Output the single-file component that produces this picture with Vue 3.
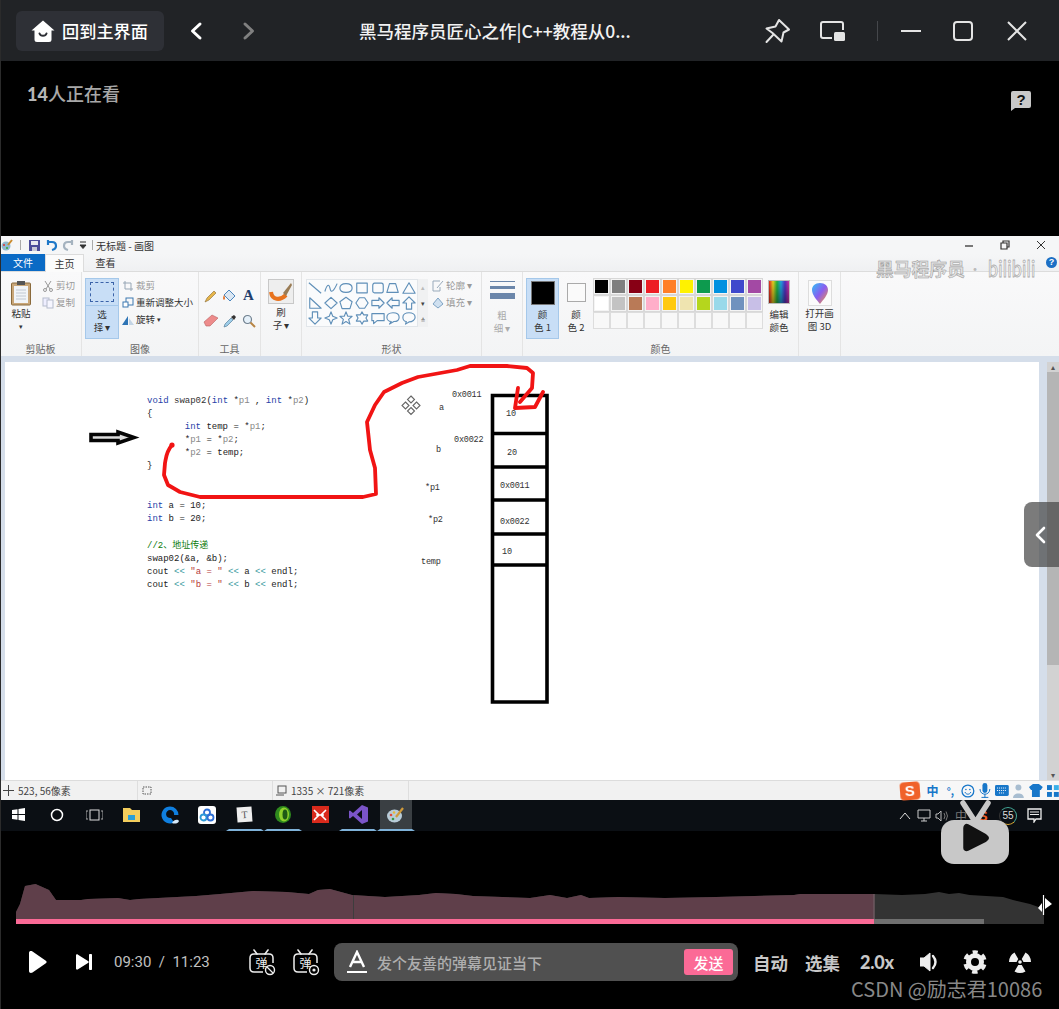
<script setup>
const paletteTop = ['#000000','#7f7f7f','#880015','#ed1c24','#ff7f27','#fff200','#0d9a4e','#0091e0','#3f48cc','#a349a4']
const paletteMid = ['#ffffff','#c3c3c3','#b97a57','#ffaec9','#ffc90e','#efe4b0','#b5d61d','#99d9ea','#7092be','#c8bfe7']
const paletteEnd = Array(10).fill('#f8f8f8')
const palette = [...paletteTop, ...paletteMid, ...paletteEnd]

const shapes = [
  'M1 2 L15 14','M1 12 C4 2 6 4 7 9 S11 12 15 3','M8 3 C3 3 1 5 1 8 S3 13 8 13 S15 11 15 8 S13 3 8 3Z','M2 2.5H14V13.5H2Z','M4 2.5H12Q14 2.5 14 5V11Q14 13.5 12 13.5H4Q2 13.5 2 11V5Q2 2.5 4 2.5Z','M4 3H11L14 13H1Z','M8 2L15 14H1Z',
  'M2 2L15 14H2Z','M8 1.5L15 8L8 14.5L1 8Z','M8 1.5L15 6.5L12.5 14.5H3.5L1 6.5Z','M5 2H11L15 8L11 14H5L1 8Z','M1 5H9V2L15 8L9 14V11H1Z','M15 5H7V2L1 8L7 14V11H15Z','M5 15V8H1L8 1L15 8H11V15Z',
  'M5 1V8H1L8 15L15 8H11V1Z','M8 1L10 6L15 8L10 10L8 15L6 10L1 8L6 6Z','M8 1L10 6H15L11 9.5L12.5 15L8 12L3.5 15L5 9.5L1 6H6Z','M8 1L10 4.5H14.5L12.5 8L14.5 11.5H10L8 15L6 11.5H1.5L3.5 8L1.5 4.5H6Z','M1 3H15V11H7L3 14.5V11H1Z','M8 2C3 2 1 4.5 1 7S3 12 6 12L4 15L9 12C13 12 15 10 15 7S13 2 8 2Z','M8 2C4 2 1 4 1 7C1 10 3 12 5 12L4 15L8 12.5C12 12.5 15 10 15 7S12 2 8 2Z'
]

const codeLines = [
  [['kw','void'],['',' '],['fn','swap02'],['','('],['kw','int'],['',' *'],['par','p1'],['',' , '],['kw','int'],['',' *'],['par','p2'],['',')']],
  [['','{']],
  [['','       '],['kw','int'],['',' temp = *'],['par','p1'],['',';']],
  [['','       *'],['par','p1'],['',' = *'],['par','p2'],['',';']],
  [['','       *'],['par','p2'],['',' = temp;']],
  [['','}']],
  [['',' ']],
  [['',' ']],
  [['kw','int'],['',' a = 10;']],
  [['kw','int'],['',' b = 20;']],
  [['',' ']],
  [['com','//2、地址传递']],
  [['','swap02(&a, &b);']],
  [['','cout '],['op','<<'],['',' '],['str','"a = "'],['',' '],['op','<<'],['',' a '],['op','<<'],['',' endl;']],
  [['','cout '],['op','<<'],['',' '],['str','"b = "'],['',' '],['op','<<'],['',' b '],['op','<<'],['',' endl;']]
]

const labels = [
  { t: '0x0011', x: 452, y: 395 }, { t: 'a', x: 439, y: 408 },
  { t: '0x0022', x: 454, y: 440 }, { t: 'b', x: 436, y: 450 },
  { t: '*p1', x: 425, y: 488 }, { t: '*p2', x: 428, y: 520 },
  { t: 'temp', x: 421, y: 562 }, { t: '10', x: 506, y: 414 },
  { t: '20', x: 507, y: 453 }, { t: '0x0011', x: 500, y: 486 },
  { t: '0x0022', x: 500, y: 522 }, { t: '10', x: 502, y: 552 }
].map(l => ({ ...l, left: l.x - 5 + 'px', top: l.y - 362 - 6 + 'px' }))
</script>

<template>
  <div class="page">
    <header class="topbar">
      <button class="home">
        <svg width="24" height="24" viewBox="0 0 24 24"><path d="M12 1.5 23.5 11.5 20.5 11.5 20.5 20.5Q20.5 23 18 23H6Q3.5 23 3.5 20.5V11.5H.5Z" fill="#fff"/><path d="M8.5 14.5C9.5 17.5 14.500 17.500 15.500 14.500" stroke="#2e3036" stroke-width="2" fill="none" stroke-linecap="round"/></svg>
        <span>回到主界面</span>
      </button>
      <svg class="nav nav-back" width="14" height="20" viewBox="0 0 14 20"><path d="M11 3 3.500 10 11 17" stroke="#fff" stroke-width="3" fill="none" stroke-linecap="round" stroke-linejoin="round"/></svg>
      <svg class="nav nav-next" width="14" height="20" viewBox="0 0 14 20"><path d="M3 3 10.500 10 3 17" stroke="#808080" stroke-width="3" fill="none" stroke-linecap="round" stroke-linejoin="round"/></svg>
      <div class="title">黑马程序员匠心之作|C++教程从0...</div>
      <div class="winbtns">
        <svg class="w-pin" width="28" height="28" viewBox="0 0 28 28"><path d="M16 3 26 12.500 20.500 15.500 18.500 24.500 9.500 16 3.500 11.500 12.500 9.500ZM10 18 3.500 25" stroke="#e4e4e4" stroke-width="2" fill="none" stroke-linejoin="round" stroke-linecap="round"/></svg>
        <svg class="w-pip" width="26" height="24" viewBox="0 0 26 24"><path d="M13 19H4Q2 19 2 17V5Q2 3 4 3H22Q24 3 24 5V11" stroke="#e4e4e4" stroke-width="2" fill="none"/><rect x="15" y="13" width="11" height="9" rx="1.500" fill="#e4e4e4"/></svg>
        <i class="w-sep"></i>
        <svg class="w-min" width="22" height="22" viewBox="0 0 22 22"><path d="M1 11H21" stroke="#e4e4e4" stroke-width="2"/></svg>
        <svg class="w-max" width="22" height="22" viewBox="0 0 22 22"><rect x="2" y="2" width="18" height="18" rx="3" stroke="#e4e4e4" stroke-width="2" fill="none"/></svg>
        <svg class="w-close" width="22" height="22" viewBox="0 0 22 22"><path d="M2 2 20 20M20 2 2 20" stroke="#e4e4e4" stroke-width="2"/></svg>
      </div>
    </header>

    <section class="viewers">
      <span class="viewer-count"><b>14</b>人正在看</span>
      <svg class="help" width="22" height="22" viewBox="0 0 22 22"><path d="M3 1H19Q21 1 21 3V16Q21 18 19 18H5L1 21V3Q1 1 3 1Z" fill="#c8c8c8"/><text x="11" y="15" text-anchor="middle" font-size="15" font-weight="700" font-family="Liberation Sans, sans-serif" fill="#111">?</text></svg>
    </section>

    <section class="video">
      <div class="paint">
        <div class="pt-title">
          <svg width="12" height="12" viewBox="0 0 12 12"><circle cx="5" cy="7" r="4.500" fill="#8fb8d0"/><circle cx="3" cy="6" r="1" fill="#d33"/><circle cx="6" cy="9" r="1" fill="#3a3"/><path d="M7 6 11 1" stroke="#c98a2c" stroke-width="2"/></svg>
          <i class="qsep"></i>
          <svg class="q-save" width="13" height="13" viewBox="0 0 13 13"><rect x="1" y="1" width="11" height="11" fill="#4b4b9a"/><rect x="3" y="2" width="7" height="4" fill="#e8e8f0"/><rect x="4" y="8" width="5" height="4" fill="#c8c8d8"/></svg>
          <svg width="13" height="13" viewBox="0 0 13 13"><path d="M3 3 H7 Q11 3 11 7 Q11 10 7 11 M3 1V6" stroke="#1e78c8" stroke-width="2.200" fill="none"/></svg>
          <svg width="13" height="13" viewBox="0 0 13 13"><path d="M10 3 H6 Q2 3 2 7 Q2 10 6 11 M10 1V6" stroke="#a5b3bf" stroke-width="2.200" fill="none"/></svg>
          <svg width="8" height="8" viewBox="0 0 8 8"><path d="M1 1H7M1 4H7L4 7.500Z" stroke="#333" fill="#333"/></svg>
          <i class="qsep q2"></i>
          <span class="doc-name">无标题 - 画图</span>
          <span class="pt-win">
            <svg width="10" height="10" viewBox="0 0 10 10"><path d="M1 6H9" stroke="#333" stroke-width="1.300"/></svg>
            <svg width="10" height="10" viewBox="0 0 10 10"><path d="M3 3V1H9V7H7M1 3H7V9H1Z" stroke="#333" stroke-width="1.200" fill="none"/></svg>
            <svg width="10" height="10" viewBox="0 0 10 10"><path d="M1 1 9 9M9 1 1 9" stroke="#333" stroke-width="1"/></svg>
          </span>
        </div>
        <div class="pt-tabs">
          <span class="tab file">文件</span>
          <span class="tab active">主页</span>
          <span class="tab view">查看</span>
          <span class="watermark"><em>黑马程序员</em><small>·</small><strong>bilibili</strong></span>
          <span class="help-dot">?</span>
        </div>

        <div class="ribbon">
          <div class="group g-clip">
            <div class="g-body">
              <div class="big">
                <svg width="22" height="26" viewBox="0 0 22 26"><rect x="1.500" y="3" width="19" height="22" rx="1" fill="#c9a77a" stroke="#8a6a3c"/><rect x="4" y="6" width="14" height="17" fill="#f1f4f8"/><rect x="7" y="1" width="8" height="4" fill="#555"/><path d="M6 10H16M6 13H16M6 16H16M6 19H16" stroke="#c0c8d2"/></svg>
                <span>粘贴</span><span class="caret">▾</span>
              </div>
              <div class="small-col muted">
                <span class="s-row"><svg width="12" height="12" viewBox="0 0 12 12"><path d="M3 1 8 9M9 1 4 9" stroke="#999"/><circle cx="3" cy="10" r="1.500" fill="none" stroke="#999"/><circle cx="9" cy="10" r="1.500" fill="none" stroke="#999"/></svg>剪切</span>
                <span class="s-row"><svg width="12" height="12" viewBox="0 0 12 12"><rect x="1" y="1" width="6" height="8" fill="#eef" stroke="#b5bccc"/><rect x="5" y="3" width="6" height="8" fill="#f6f6ff" stroke="#b5bccc"/></svg>复制</span>
              </div>
            </div>
            <div class="g-label">剪贴板</div>
          </div>

          <div class="group g-image">
            <div class="g-body">
              <div class="select-btn">
                <div class="select-top"><i></i></div>
                <div class="select-text"><span>选</span><span>择 ▾</span></div>
              </div>
              <div class="small-col">
                <span class="s-row muted"><svg width="12" height="12" viewBox="0 0 12 12"><path d="M3 1V9H11M1 3H9V11" stroke="#97a6b5" fill="none"/></svg>裁剪</span>
                <span class="s-row"><svg width="12" height="12" viewBox="0 0 12 12"><rect x="4" y="1" width="7" height="7" fill="none" stroke="#3c78b0"/><rect x="1" y="5" width="5" height="5" fill="#fff" stroke="#3c78b0"/></svg>重新调整大小</span>
                <span class="s-row"><svg width="12" height="12" viewBox="0 0 12 12"><path d="M6 2V11H0Z" fill="#2e74b5"/><path d="M7 4V11H12Z" fill="#c4d5e6"/></svg>旋转 <span class="caret-in">▾</span></span>
              </div>
            </div>
            <div class="g-label">图像</div>
          </div>

          <div class="group g-tools">
            <div class="g-body tools-grid">
              <svg width="14" height="14" viewBox="0 0 14 14"><path d="M1 13 3 9 10 2 12 4 5 11Z" fill="#e6b54a" stroke="#8a6a30" stroke-width=".6"/></svg>
              <svg width="15" height="15" viewBox="0 0 15 15"><path d="M7 2 13 8 8 13 2 7Z" fill="#dbe7f3" stroke="#4c86bd"/><path d="M2 7Q0 11 2 12 4 11 2 7Z" fill="#e4762e"/></svg>
              <span class="tool-a">A</span>
              <svg width="16" height="13" viewBox="0 0 16 13"><path d="M1 8 9 1 15 4 7 12H3Z" fill="#ed8b8b" stroke="#b85f5f" stroke-width=".6"/></svg>
              <svg width="14" height="14" viewBox="0 0 14 14"><path d="M1 13 2 10 8 4 10 6 4 12Z" fill="#9ecde8" stroke="#46708f" stroke-width=".6"/><path d="M8 3 11 1 13 3 11 6Z" fill="#333"/></svg>
              <svg width="14" height="14" viewBox="0 0 14 14"><circle cx="5.500" cy="5.500" r="4" fill="#e6f1fa" stroke="#70808f" stroke-width="1.200"/><path d="M8.500 8.500 13 13" stroke="#b78545" stroke-width="2"/></svg>
            </div>
            <div class="g-label"><span>工具</span></div>
          </div>

          <div class="group g-brush">
            <div class="g-body col-center">
              <div class="brush-ico">
                <svg width="24" height="23" viewBox="0 0 24 23"><path d="M2 12C3 20 11 21 17 15" stroke="#e8731e" stroke-width="4" fill="none"/><path d="M14 13 22 3 23 5 17 16Z" fill="#9a7c55"/></svg>
              </div>
              <span>刷</span><span>子 ▾</span>
            </div>
            <div class="g-label"> </div>
          </div>

          <div class="group g-shapes">
            <div class="g-body">
              <div class="gallery">
                <svg v-for="(d, i) in shapes" :key="i" width="14" height="14" viewBox="0 0 16 16"><path :d="d" fill="none" stroke="#5f8fb8" stroke-width="1.300" stroke-linejoin="round"/></svg>
              </div>
              <div class="gal-scroll"><span>▴</span><span class="dark">▾</span><span class="dark">⩮</span></div>
              <div class="small-col muted outline">
                <span class="s-row"><svg width="12" height="12" viewBox="0 0 12 12"><path d="M1 1H8M1 1V11H8V7M5 8 11 1" stroke="#9ab" fill="none"/></svg>轮廓 ▾</span>
                <span class="s-row"><svg width="12" height="12" viewBox="0 0 12 12"><path d="M6 1 11 7 6 11 1 7Z" fill="#cfe0f0" stroke="#7ea3c4"/></svg>填充 ▾</span>
              </div>
            </div>
            <div class="g-label">形状</div>
          </div>

          <div class="group g-size">
            <div class="g-body col-center">
              <div class="size-lines"><i class="l1"></i><i class="l2"></i><i class="l3"></i></div>
              <span>粗</span><span>细 ▾</span>
            </div>
            <div class="g-label"> </div>
          </div>

          <div class="group g-colors">
            <div class="g-body">
              <div class="color-pick active"><i class="sw black"></i><span>颜</span><span>色 1</span></div>
              <div class="color-pick"><i class="sw white"></i><span>颜</span><span>色 2</span></div>
              <div class="palette">
                <i v-for="(c, i) in palette" :key="i" :class="['cell', { blank: i >= 20 }]" :style="{ background: c }"></i>
              </div>
              <div class="edit-col"><i class="rainbow"></i><span>编辑</span><span>颜色</span></div>
            </div>
            <div class="g-label">颜色</div>
          </div>

          <div class="group g-3d">
            <div class="g-body col-center">
              <div class="ico-3d">
                <svg width="16" height="21" viewBox="0 0 16 21"><defs><linearGradient id="pg" x1="0" y1="0" x2="1" y2="1"><stop offset="0" stop-color="#2fc1f5"/><stop offset=".5" stop-color="#8a5cf0"/><stop offset="1" stop-color="#ff9a2e"/></linearGradient></defs><path d="M8 0C3 0 0 3 0 7 0 12 5 17 8 21 11 17 16 12 16 7 16 3 13 0 8 0Z" fill="url(#pg)"/></svg>
              </div>
              <span>打开画</span><span>图 3D</span>
            </div>
            <div class="g-label"> </div>
          </div>
          <div class="group g-rest"></div>
        </div>

        <div class="strip"></div>

        <div class="canvas">
          <div class="sheet">
            <pre class="code"><code v-for="(line, i) in codeLines" :key="i" class="code-line"><span v-for="(seg, j) in line" :key="j" :class="seg[0]">{{ seg[1] }}</span></code></pre>
            <span v-for="(l, i) in labels" :key="'l' + i" class="lab" :style="{ left: l.left, top: l.top }">{{ l.t }}</span>
            <svg class="draw" width="1034" height="418" viewBox="5 362 1034 418">
              <path d="M91 434.500H118V432L134 437.500 118 443V440.500H91Z" fill="#ddd" stroke="#050505" stroke-width="3.600"/>
              <path d="M492.500 395.500H547V702H492.500ZM492.500 433.500H547M492.500 467H547M492.500 500H547M492.500 534H547M492.500 565H547" fill="none" stroke="#000" stroke-width="3.600"/>
              <g fill="none" stroke="#666" stroke-width="1.100">
                <path d="M411 396 414.500 399.500 411 403 407.500 399.500ZM411 407.500 414.500 411 411 414.500 407.500 411ZM405.500 402 409 405.500 405.500 409 402 405.500ZM416.500 402 420 405.500 416.500 409 413 405.500Z"/>
              </g>
              <circle cx="172" cy="445" r="2.600" fill="#f11414"/>
              <path d="M172 445C166 452 166 458 165 463L164 475 168 485 180 492 200 497H363L376 494 375 468 370 450 367 422 375 405 384 392 402 383 418 377 457 370 470 366H507L527 368 533 373 532 388 520 402M518 388 515 408 535 407 543 392" fill="none" stroke="#f11414" stroke-width="3.800" stroke-linejoin="round" stroke-linecap="round"/>
            </svg>
          </div>
          <div class="vscroll"><i class="up">▴</i><i class="thumb"></i><i class="down">▾</i></div>
        </div>

        <div class="statusbar">
          <span class="st st1"><svg width="11" height="11" viewBox="0 0 11 11"><path d="M5.500 0V11M0 5.500H11" stroke="#444"/></svg>523, 56像素</span>
          <span class="st st2"><svg width="11" height="11" viewBox="0 0 11 11"><rect x="2" y="2" width="8" height="7" fill="none" stroke="#555" stroke-dasharray="1.500 1"/></svg></span>
          <span class="st st3"><svg width="11" height="11" viewBox="0 0 11 11"><rect x="2" y="1" width="8" height="7" fill="none" stroke="#555"/><path d="M0 10H8" stroke="#555"/></svg>1335 × 721像素</span>
        </div>
        <div class="ime">
          <span class="ime-s">S</span>
          <span class="ime-t">中</span>
          <span class="ime-t small">°,</span>
          <svg width="14" height="14" viewBox="0 0 14 14"><circle cx="7" cy="7" r="6" fill="none" stroke="#1877c9" stroke-width="1.300"/><path d="M4 8C5 11 9 11 10 8" fill="none" stroke="#1877c9"/><circle cx="5" cy="5.500" r=".8" fill="#1877c9"/><circle cx="9" cy="5.500" r=".8" fill="#1877c9"/></svg>
          <svg width="12" height="15" viewBox="0 0 12 15"><rect x="3.500" y="0" width="5" height="10" rx="2.500" fill="#1877c9"/><path d="M1 6C1 13 11 13 11 6M6 11V15M2.500 14.500H9.500" stroke="#1877c9" fill="none"/></svg>
          <svg width="14" height="11" viewBox="0 0 14 11"><rect width="14" height="11" rx="1.500" fill="#1877c9"/><path d="M2 3H12M2 5.500H12M4 8H10" stroke="#fff" stroke-dasharray="1 1"/></svg>
          <svg width="13" height="14" viewBox="0 0 13 14"><circle cx="5.500" cy="3.500" r="3" fill="#a8bdd0"/><path d="M0 14C0 8 11 8 11 14Z" fill="#a8bdd0"/></svg>
          <svg width="14" height="13" viewBox="0 0 14 13"><path d="M4 0H10L14 3 12 6H11V13H3V6H2L0 3Z" fill="#1877c9"/></svg>
          <svg width="12" height="12" viewBox="0 0 12 12"><rect width="5" height="5" fill="#1877c9"/><rect x="7" width="5" height="5" fill="#3ab0e8"/><rect y="7" width="5" height="5" fill="#1877c9"/><rect x="7" y="7" width="5" height="5" fill="#1877c9"/></svg>
        </div>
      </div>

      <div class="taskbar">
        <span class="tk"><svg width="13" height="13" viewBox="0 0 13 13"><path d="M0 2 5.500 1.200V6H0ZM6.500 1 13 0V6H6.500ZM0 7H5.500V11.800L0 11ZM6.500 7H13V13L6.500 12Z" fill="#fff"/></svg></span>
        <span class="tk"><svg width="14" height="14" viewBox="0 0 14 14"><circle cx="7" cy="7" r="5.500" fill="none" stroke="#fff" stroke-width="1.500"/></svg></span>
        <span class="tk"><svg width="17" height="12" viewBox="0 0 17 12"><rect x="4" y="1" width="9" height="10" fill="none" stroke="#ddd"/><path d="M2 2H0V10H2M15 2H17V10H15" stroke="#aaa" fill="none"/></svg></span>
        <span class="tk"><svg width="17" height="15" viewBox="0 0 17 15"><path d="M0 1H7L9 3H17V15H0Z" fill="#f3cd5c"/><rect x="5" y="8" width="7" height="5" fill="#2a9fd8"/></svg></span>
        <span class="tk"><svg width="18" height="18" viewBox="0 0 18 18"><path d="M9 0.500A8.500 8.500 0 1 0 13 16.500L10 12A4 4 0 1 1 13 9H17.500A8.500 8.500 0 0 0 9 0.500Z" fill="#0f7fe0"/><path d="M11 17C13 13 17 13 18 15 17 18 13 18 11 17Z" fill="#d5e8f8"/></svg></span>
        <span class="tk"><span class="baidu"><svg width="16" height="14" viewBox="0 0 16 14"><circle cx="8" cy="4.500" r="3" fill="none" stroke="#2d6fd6" stroke-width="1.800"/><circle cx="4.500" cy="9.500" r="3" fill="none" stroke="#2d9ad6" stroke-width="1.800"/><circle cx="11.500" cy="9.500" r="3" fill="none" stroke="#2d6fd6" stroke-width="1.800"/></svg></span></span>
        <span class="tk run"><span class="t-ico">T</span></span>
        <span class="tk run"><svg width="16" height="17" viewBox="0 0 16 17"><ellipse cx="8" cy="8.500" rx="8" ry="8.500" fill="#2f8a1e"/><ellipse cx="9" cy="8.500" rx="5" ry="7" fill="#8fd12c"/><ellipse cx="10" cy="8.500" rx="2.500" ry="5" fill="#1e5a15"/></svg></span>
        <span class="tk"><span class="x-ico"><svg width="14" height="12" viewBox="0 0 14 12"><path d="M1 1 6 6 1 11M13 1 8 6 13 11M3 6H11" stroke="#fff" stroke-width="1.600" fill="none"/></svg></span></span>
        <span class="tk run"><svg width="19" height="19" viewBox="0 0 19 19"><path d="M13 0 19 2.500V16.500L13 19 4 11 1 13.500 0 13V6L1 5.500 4 8ZM13 5 8 9.500 13 14Z" fill="#7a54c8"/></svg></span>
        <span class="tk run act"><svg width="18" height="16" viewBox="0 0 18 16"><ellipse cx="7.500" cy="9" rx="7.500" ry="6.500" fill="#b8ccd8"/><circle cx="4" cy="8" r="1.300" fill="#e04a3a"/><circle cx="7" cy="5.500" r="1.300" fill="#e8b83a"/><circle cx="6" cy="12" r="1.300" fill="#3a9a4a"/><path d="M9 10 16 1" stroke="#d09a3a" stroke-width="2.200"/></svg></span>
        <div class="tray">
          <span class="tr w18"><svg width="12" height="8" viewBox="0 0 12 8"><path d="M1 7 6 1 11 7" stroke="#ddd" fill="none"/></svg></span>
          <span class="tr w19"><svg width="15" height="14" viewBox="0 0 15 14"><path d="M2 1H14V9H2ZM5 12H11M8 9V12" stroke="#ccc" fill="none"/></svg></span>
          <span class="tr w18"><svg width="14" height="12" viewBox="0 0 14 12"><path d="M1 4H3L6 1V11L3 8H1Z" stroke="#bbb" fill="none"/><path d="M9 3Q11 6 9 9M11 1.500Q14 6 11 10.500" stroke="#777" fill="none"/></svg></span>
          <span class="tr w20 tray-text">中</span>
          <span class="tr w24 tray-s">S</span>
          <span class="tr w26 ring">55</span>
          <span class="tr w26"><svg width="15" height="15" viewBox="0 0 15 15"><path d="M1 1H14V11H9L7 14V11H1Z" fill="none" stroke="#eee" stroke-width="1.300"/><path d="M3 4H12M3 6.500H12" stroke="#eee"/></svg></span>
        </div>
      </div>
    </section>

    <svg class="tv" width="70" height="66" viewBox="0 0 70 66">
      <path d="M22 3 33 20M47 3 36 20" stroke="#c8c8c8" stroke-width="5.500" stroke-linecap="round"/>
      <rect x="0" y="20" width="68" height="44" rx="13" fill="#c8c8c8"/>
      <path d="M23 28C23 25 25 24 27 25L45 35C48 37 48 39 45 41L27 50C25 51 23 50 23 48Z" fill="#111" stroke="#111" stroke-width="1.500" stroke-linejoin="round"/>
    </svg>

    <div class="side-tab"><svg width="11" height="18" viewBox="0 0 11 18"><path d="M9 2 2 9 9 16" stroke="#fff" stroke-width="2.600" fill="none" stroke-linecap="round" stroke-linejoin="round"/></svg></div>

    <section class="timeline">
      <svg class="wave" width="1059" height="54" viewBox="0 880 1059 54">
        <defs><clipPath id="played"><rect x="0" y="880" width="874" height="50"/></clipPath></defs>
        <path d="M16 912 20 904 25 886 35.500 884 49 890 56 900H81L88 899 118 898 130 900 139 899 196 896 220 894 253 891 287 892 309 894 318 890 330 889 352 895 385 897 419 895 436 893 456 894 473 896 530 898 550 895 567 898 581 895 589 898 618 897 665 898 716 897 794 895 800 894 874 894 902 895 925 894 939 892 949 894 959 893 969.500 895 1003 897 1013 900 1030 904 1044 909V924H16Z" fill="#333"/>
        <path clip-path="url(#played)" d="M16 912 20 904 25 886 35.500 884 49 890 56 900H81L88 899 118 898 130 900 139 899 196 896 220 894 253 891 287 892 309 894 318 890 330 889 352 895 385 897 419 895 436 893 456 894 473 896 530 898 550 895 567 898 581 895 589 898 618 897 665 898 716 897 794 895 800 894 874 894 V924H16Z" fill="#5f3f4a"/>
        <path d="M353.500 895V919" stroke="#3d3d3d"/>
        <path d="M874 894V919" stroke="#6c5a60" stroke-width="1.500"/>
        <rect x="16" y="919" width="858" height="5" fill="#fb6a96"/>
        <rect x="874" y="919" width="110" height="5" fill="#6f6f6f"/>
        <path d="M1043.500 895V915" stroke="#fff" stroke-width="1.200"/>
        <path d="M1045 898 1052 904 1045 909ZM1042 903 1038 908 1042 912Z" fill="#fff"/>
      </svg>
    </section>

    <footer class="controls">
      <svg class="play" width="20" height="24" viewBox="0 0 20 24"><path d="M2 3C2 1 4 0.500 5.500 1.500L18.500 10.500C20 11.500 20 12.500 18.500 13.500L5.500 22.500C4 23.500 2 23 2 21Z" fill="#fff"/></svg>
      <svg class="next" width="16" height="16" viewBox="0 0 16 16"><path d="M0 1.500C0 .5 1 0 2 .7L12 7C13 7.700 13 8.300 12 9L2 15.300C1 16 0 15.500 0 14.500Z" fill="#fff"/><rect x="13" y="0" width="3" height="16" rx=".8" fill="#fff"/></svg>
      <span class="time">09:30&nbsp;&nbsp;/&nbsp;&nbsp;11:23</span>
      <svg class="dm dm1" width="27" height="27" viewBox="0 0 27 27"><path d="M8 5 5 1M16 5 19 1" stroke="#eee" stroke-width="1.600" stroke-linecap="round"/><path d="M14 23H5Q1 23 1 19V9Q1 5 5 5H20Q24 5 24 9V14" stroke="#eee" stroke-width="1.500" fill="none"/><text x="12.500" y="19" text-anchor="middle" font-size="12" fill="#eee" font-family="Noto Sans CJK SC, sans-serif">弹</text><circle cx="21" cy="21" r="4.500" fill="#000" stroke="#eee" stroke-width="1.400"/><path d="M18 18 24 24" stroke="#eee" stroke-width="1.300"/></svg>
      <svg class="dm dm2" width="27" height="27" viewBox="0 0 27 27"><path d="M8 5 5 1M16 5 19 1" stroke="#eee" stroke-width="1.600" stroke-linecap="round"/><path d="M14 23H5Q1 23 1 19V9Q1 5 5 5H20Q24 5 24 9V14" stroke="#eee" stroke-width="1.500" fill="none"/><text x="12.500" y="19" text-anchor="middle" font-size="12" fill="#eee" font-family="Noto Sans CJK SC, sans-serif">弹</text><circle cx="21" cy="21" r="4.500" fill="#000" stroke="#eee" stroke-width="1.400"/><circle cx="21" cy="21" r="1.600" fill="#eee"/></svg>
      <div class="dm-input">
        <svg width="20" height="24" viewBox="0 0 20 24"><path d="M3 17 10 2 17 17M5.500 12H14.500" stroke="#fff" stroke-width="2.400" fill="none"/><path d="M0 22H20" stroke="#fff" stroke-width="2"/></svg>
        <span class="ph">发个友善的弹幕见证当下</span>
        <button class="send">发送</button>
      </div>
      <span class="ctl c-auto">自动</span>
      <span class="ctl c-sel">选集</span>
      <span class="ctl c-speed">2.0x</span>
      <svg class="vol" width="22" height="20" viewBox="0 0 22 20"><path d="M0 6H4L10 1V19L4 14H0Z" fill="#eee" stroke="#eee" stroke-linejoin="round"/><path d="M13 4Q18 10 13 16" stroke="#eee" stroke-width="2.400" fill="none" stroke-linecap="round"/></svg>
      <svg class="gear" width="24" height="24" viewBox="0 0 24 24"><circle cx="12" cy="12" r="6.500" fill="none" stroke="#eee" stroke-width="5"/><circle cx="12" cy="12" r="10" fill="none" stroke="#eee" stroke-width="3.500" stroke-dasharray="5.500 4.970" stroke-dashoffset="2.750" transform="rotate(-90 12 12)"/></svg>
      <svg class="rad" width="24" height="24" viewBox="0 0 24 24"><path d="M13.750 15.030 17.500 21.500A11 11 0 0 1 6.500 21.500L10.250 15.030ZM13.750 8.970 17.500 2.470A11 11 0 0 1 23 12L15.500 12ZM8.500 12 1 12A11 11 0 0 1 6.500 2.470L10.250 8.970Z" fill="#eee"/><circle cx="12" cy="12" r="1.800" fill="#eee"/></svg>
    </footer>
    <div class="csdn">CSDN @励志君10086</div>
  </div>
</template>

<style>
html, body { margin: 0; background: #000; }
</style>

<style scoped>
.page {
  position: relative;
  width: 1059px;
  height: 1009px;
  overflow: hidden;
  background: #000;
  font-family: "Noto Sans CJK SC", "Liberation Sans", sans-serif;
  color: #eee;
}
.page::before {
  content: "";
  position: absolute;
  left: 0; top: 0; bottom: 0;
  width: 1px;
  background: #2b2b2b;
  z-index: 9;
}
.topbar {
  height: 61px;
  box-sizing: border-box;
  background: #212326;
  display: flex;
  align-items: center;
  position: relative;
}
.home {
  margin-left: 16px;
  width: 148px;
  height: 40px;
  border: 0;
  border-radius: 6px;
  background: #2e3036;
  color: #fff;
  display: flex;
  align-items: center;
  gap: 7px;
  padding: 0 0 0 15px;
  font: 500 17.200px "Noto Sans CJK SC", sans-serif;
}
.nav { display: block; }
.nav-back { margin-left: 25px; }
.nav-next { margin-left: 39px; }
.title {
  margin-left: 103px;
  width: 290px;
  font-size: 17.500px;
  font-weight: 500;
  color: #f2f2f2;
  white-space: nowrap;
}
.winbtns { display: flex; align-items: center; margin-left: 112px; }
.w-pin { margin-left: 2px; }
.w-pip { margin-left: 28px; }
.w-sep { width: 1px; height: 20px; background: #45474b; margin-left: 32px; }
.w-min { margin-left: 22px; }
.w-max { margin-left: 30px; }
.w-close { margin-left: 32px; }

.viewers {
  height: 175px;
  position: relative;
}
.viewer-count {
  position: absolute;
  left: 27px; top: 19px;
  font-size: 18px;
  font-weight: 500;
  color: #a8a8a8;
}
.viewer-count b { font-family: "Lato", sans-serif; font-weight: 900; color: #b5b5b5; }
.help { position: absolute; left: 1010px; top: 29px; }

.video { height: 595px; }
.paint {
  height: 564px;
  position: relative;
  background: #f5f6f7;
  color: #444;
  font-size: 9.500px;
  line-height: 13px;
  filter: blur(.5px);
  display: flex;
  flex-direction: column;
}
.pt-title {
  height: 18px;
  background: #f5f6f7;
  display: flex;
  align-items: center;
  padding-left: 1px;
  gap: 4px;
  flex: none;
}
.qsep { width: 1px; height: 10px; background: #aaa; margin: 0 3px; }
.qsep.q2 { margin: 0 -1px 0 1px; }
.doc-name { font-size: 10px; color: #333; }
.pt-win { margin-left: auto; margin-right: 13px; display: flex; gap: 26px; }
.pt-tabs {
  height: 18px;
  flex: none;
  display: flex;
  position: relative;
  background: linear-gradient(#f5f6f7, #eff0f2);
  border-bottom: 1px solid #dcdcdc;
  box-sizing: border-box;
  align-items: stretch;
}
.tab { width: 39px; text-align: center; line-height: 18px; color: #333; font-size: 10px; }
.tab.file { width: 44px; margin-left: 1px; background: #0a6ac5; color: #fff; }
.tab.active { background: #fbfbfb; height: 18px; border: 1px solid #dcdcdc; border-bottom: 0; box-sizing: border-box; }
.tab.view { margin-left: 2px; }
.watermark {
  position: absolute;
  left: 876px; top: 2px;
  display: flex;
  align-items: center;
  height: 24px;
  color: rgba(235, 235, 235, .8);
  z-index: 2;
}
.watermark em {
  font-style: normal;
  font-size: 17.800px;
  font-weight: 700;
  color: #e2e2e2;
  -webkit-text-stroke: .5px #999;
}
.watermark small { font-size: 14px; color: #bbb; margin: 0 6px 0 3px; }
.watermark strong {
  font-family: "Lato", sans-serif;
  font-size: 18px;
  font-weight: 400;
  color: #f5f5f5;
  -webkit-text-stroke: .6px #a9a9a9;
  letter-spacing: .2px;
  display: inline-block;
  transform: scaleY(1.3);
}
.help-dot {
  position: absolute;
  left: 1046px; top: 3px;
  width: 11px; height: 11px;
  border-radius: 50%;
  background: #1b6fc5;
  color: #fff;
  font: 700 9px/11px "Liberation Sans", sans-serif;
  text-align: center;
}
.ribbon {
  height: 84px;
  flex: none;
  display: flex;
  background: linear-gradient(#f9f9fa, #f3f4f5);
}
.group {
  box-sizing: border-box;
  border-right: 1px solid #e4e4e4;
  display: flex;
  flex-direction: column;
  flex: none;
}
.g-body { flex: 1; display: flex; min-height: 0; }
.g-label { height: 19px; box-sizing: border-box; padding-top: 5px; line-height: 14px; text-align: center; color: #666; font-size: 10px; white-space: pre; }
.g-clip { width: 82px; }
.g-image { width: 117px; }
.g-tools { width: 62px; }
.g-brush { width: 41px; }
.g-shapes { width: 180px; }
.g-size { width: 41px; }
.g-colors { width: 276px; }
.g-3d { width: 42px; }
.g-rest { flex: 1; border: 0; }
.big { width: 42px; padding-top: 8px; display: flex; flex-direction: column; align-items: center; color: #333; }
.big span:first-of-type { margin-top: 1px; }
.caret { font-size: 7px; line-height: 13px; }
.caret-in { font-size: 7px; }
.small-col { display: flex; flex-direction: column; padding-top: 7px; gap: 3.500px; white-space: nowrap; color: #333; }
.small-col.muted { color: #9a9a9a; }
.s-row { display: flex; align-items: center; gap: 2px; height: 13.500px; }
.muted { color: #9a9a9a; }
.select-btn {
  margin: 6px 3px 0 3px;
  width: 34px;
  height: 61px;
  box-sizing: border-box;
  background: #c8def6;
  border: 1px solid #a5c8ea;
  display: flex;
  flex-direction: column;
  flex: none;
}
.select-top { height: 27px; border-bottom: 1px solid #a5c8ea; display: flex; align-items: center; justify-content: center; box-sizing: border-box; }
.select-top i { width: 22px; height: 18px; border: 1px dashed #3a62a8; }
.select-text { display: flex; flex-direction: column; align-items: center; padding-top: 2px; color: #333; }
.tools-grid {
  display: grid;
  grid-template-columns: repeat(3, 19px);
  grid-template-rows: 25px 25px;
  place-items: center;
  padding: 11px 0 0 2px;
}
.tool-a { font: 700 15px/15px "Liberation Serif", serif; color: #1f3f6e; }
.col-center { flex-direction: column; align-items: center; color: #333; }
.brush-ico {
  width: 26px; height: 25px;
  margin: 7px 0 2px;
  background: #eee;
  border: 1px solid #c8c8c8;
  display: flex; align-items: center; justify-content: center;
  box-sizing: border-box;
}
.gallery {
  width: 112px;
  height: 48px;
  margin: 7px 0 0 4px;
  box-sizing: border-box;
  background: #fafbfc;
  border: 1px solid #e2e6ea;
  display: grid;
  grid-template-columns: repeat(7, 1fr);
  grid-template-rows: repeat(3, 1fr);
  place-items: center;
  flex: none;
}
.gal-scroll {
  width: 10px;
  height: 48px;
  margin-top: 7px;
  background: #f0f1f2;
  display: flex;
  flex-direction: column;
  justify-content: space-around;
  align-items: center;
  font-size: 7px;
  color: #bbb;
}
.gal-scroll .dark { color: #444; }
.outline { padding-left: 4px; }
.g-size .col-center { color: #aaa; }
.size-lines { width: 25px; margin: 9px 0 10px; display: flex; flex-direction: column; gap: 4px; }
.size-lines i { display: block; background: #6b86aa; }
.l1 { height: 1px; }
.l2 { height: 3px; }
.l3 { height: 6px; }
.g-colors .g-body { padding-left: 3px; }
.color-pick {
  width: 33px;
  height: 61px;
  margin-top: 6px;
  box-sizing: border-box;
  display: flex;
  flex-direction: column;
  align-items: center;
  color: #333;
  border: 1px solid transparent;
  flex: none;
  margin-right: 6px;
}
.color-pick:nth-child(2) { width: 22px; margin-right: 6px; }
.color-pick.active { background: #c8def6; border-color: #a5c8ea; }
.sw { display: block; flex: none; box-sizing: border-box; }
.sw.black { width: 24px; height: 24px; margin: 2px 0 3px; background: #000; border: 1px solid #777; }
.sw.white { width: 19px; height: 19px; margin: 4px 0 6px; background: #fafafa; border: 1px solid #aaa; }
.palette {
  width: 170px;
  height: 51px;
  margin-top: 6px;
  display: grid;
  grid-template-columns: repeat(10, 17px);
  grid-template-rows: repeat(3, 17px);
  flex: none;
}
.cell {
  display: block;
  box-sizing: border-box;
  border: 1px solid #d8d8d8;
  outline: 1px solid #f4f4f4;
  outline-offset: -2px;
}
.cell.blank { outline: 0; border-color: #ddd; background: #f8f8f8; }
.edit-col { margin-left: 4px; width: 24px; display: flex; flex-direction: column; align-items: center; color: #333; }
.rainbow {
  display: block;
  width: 22px; height: 24px;
  margin: 8px 0 4px;
  box-sizing: border-box;
  border: 1px solid #bbb;
  background: linear-gradient(#0000, #0006), linear-gradient(90deg, #e02020, #e8d020, #20b040, #20a0e0, #5030c0, #d030a0);
}
.ico-3d {
  width: 24px; height: 26px;
  margin: 8px 0 1px;
  box-sizing: border-box;
  background: #fbfbfb;
  border: 1px solid #ddd;
  display: flex; align-items: center; justify-content: center;
}
.strip { height: 6px; flex: none; background: #d5deea; }
.canvas { height: 418px; flex: none; display: flex; background: #d5deea; padding-left: 5px; box-sizing: border-box; }
.sheet { width: 1034px; height: 418px; background: #fff; position: relative; flex: none; }
.code {
  position: absolute;
  left: 142px; top: 32.500px;
  margin: 0;
  font: 9px/13.200px "Liberation Mono", monospace;
  color: #222;
}
.code-line { display: block; height: 13.200px; white-space: pre; font-family: "Liberation Mono", "Noto Sans CJK SC", monospace; }
.kw { color: #1f3fa8; }
.fn { color: #333; }
.par { color: #888; }
.str { color: #b53a3a; }
.op { color: #3a9aa0; }
.com { color: #0a7a0a; }
.lab {
  position: absolute;
  font: 8.500px/12px "Liberation Mono", monospace;
  color: #333;
  white-space: nowrap;
  letter-spacing: -.2px;
}
.draw { position: absolute; left: 0; top: 0; }
.vscroll {
  margin-left: 8px;
  width: 12px;
  background: #d2d2d2;
  display: flex;
  flex-direction: column;
  align-items: center;
  flex: none;
}
.vscroll i { font-style: normal; font-size: 8px; line-height: 10px; color: #555; }
.vscroll .thumb { flex: none; width: 12px; height: 293px; background: #b5b5b5; }
.vscroll .down { margin-top: auto; }
.statusbar {
  height: 20px;
  flex: none;
  box-sizing: border-box;
  border-top: 1px solid #dcdcdc;
  background: #f1f1f1;
  display: flex;
  font-size: 10px;
  color: #444;
  align-items: stretch;
}
.st { display: flex; align-items: center; gap: 4px; padding-left: 3px; border-right: 1px solid #dedede; box-sizing: border-box; }
.st1 { width: 138px; }
.st2 { width: 135px; padding-left: 3px; }
.st3 { width: 136px; }
.ime {
  position: absolute;
  left: 900px; top: 545px;
  width: 159px; height: 19px;
  background: #f7f7f7;
  display: flex;
  align-items: center;
  gap: 4px;
}
.ime-s {
  width: 20px; height: 18px;
  margin-right: 2px;
  border-radius: 4px;
  background: #f0622a;
  color: #fff;
  font: 700 15px/18px "Liberation Sans", sans-serif;
  text-align: center;
  transform: rotate(-4deg);
}
.ime-t { color: #1877c9; font-size: 12px; font-weight: 700; width: 14px; text-align: center; }
.ime-t.small { font-size: 10px; }
.taskbar {
  height: 31px;
  background: #0b0f14;
  display: flex;
  align-items: stretch;
}
.tk {
  width: 37.700px;
  display: flex;
  align-items: center;
  justify-content: center;
  box-sizing: border-box;
  flex: none;
  border-bottom: 2px solid transparent;
}
.tk.run { border-bottom-color: #7fb2d9; border-left: 3px solid #0b0f14; border-right: 3px solid #0b0f14; }
.tk.act { background: #3a3f43; }
.baidu { width: 18px; height: 18px; border-radius: 3px; background: #fff; display: flex; align-items: center; justify-content: center; }
.t-ico { width: 15px; height: 15px; background: #eee; color: #555; font: 10px/15px "Liberation Serif", serif; text-align: center; transform: rotate(-4deg); }
.x-ico { width: 17px; height: 17px; background: #d92a1c; display: flex; align-items: center; justify-content: center; }
.tray { margin-left: auto; margin-right: 12px; display: flex; align-items: center; }
.tr { display: flex; align-items: center; justify-content: center; color: #ccc; }
.w18 { width: 18px; }
.w19 { width: 19px; }
.w20 { width: 20px; }
.w24 { width: 24px; }
.w26 { width: 26px; }
.tray-text { font-size: 12px; color: #777; }
.tray-s { color: #f0622a; font: 700 14px "Liberation Sans", sans-serif; }
.ring {
  width: 18px; height: 18px;
  margin: 0 4px;
  border-radius: 50%;
  border: 1px solid #4a9; border-left-color: #333; border-bottom-color: #da3;
  box-sizing: border-box;
  font: 10px/16px "Liberation Sans", sans-serif;
  color: #ddd;
}
.tv { position: absolute; left: 941px; top: 800px; }
.side-tab {
  position: absolute;
  left: 1024px; top: 502px;
  width: 35px; height: 65px;
  border-radius: 8px 0 0 8px;
  background: rgba(72, 72, 72, .72);
  display: flex;
  align-items: center;
  padding-left: 11px;
  box-sizing: border-box;
}
.timeline { height: 103px; padding-top: 49px; box-sizing: border-box; }
.wave { display: block; height: 54px; }
.controls {
  position: absolute;
  left: 0; top: 942px;
  width: 1059px;
  height: 40px;
  display: flex;
  align-items: center;
  color: #bbb;
}
.play { margin-left: 27px; }
.next { margin-left: 29px; }
.time {
  margin-left: 22px;
  width: 130px;
  flex: none;
  font: 400 15px "Roboto", sans-serif;
  color: #c0c0c0;
  white-space: nowrap;
}
.dm1 { margin-left: 5px; }
.dm2 { margin-left: 17px; }
.dm-input {
  margin-left: 14px;
  width: 404px;
  height: 38px;
  border-radius: 8px;
  background: #505050;
  display: flex;
  align-items: center;
  padding-left: 13px;
  box-sizing: border-box;
  flex: none;
}
.ph { margin-left: 10px; font-size: 15px; font-weight: 500; color: #aeaeae; }
.send {
  margin-left: auto;
  margin-right: 5px;
  width: 49px; height: 26px;
  border: 0;
  border-radius: 3px;
  background: #fb6a96;
  color: #fff;
  font: 500 15px "Noto Sans CJK SC", sans-serif;
  padding: 0;
}
.ctl { font-size: 17.500px; font-weight: 700; color: #c8c8c8; white-space: nowrap; }
.c-auto { margin-left: 15px; }
.c-sel { margin-left: 17px; }
.c-speed { margin-left: 20px; font-family: "Lato", sans-serif; font-weight: 900; font-size: 18px; letter-spacing: -.2px; }
.vol { margin-left: 26px; }
.gear { margin-left: 21px; }
.rad { margin-left: 21px; }
.csdn {
  position: absolute;
  left: 851px; top: 975px;
  font: 400 20px/28px "Noto Sans CJK SC", sans-serif;
  color: #888;
  white-space: nowrap;
}
</style>
